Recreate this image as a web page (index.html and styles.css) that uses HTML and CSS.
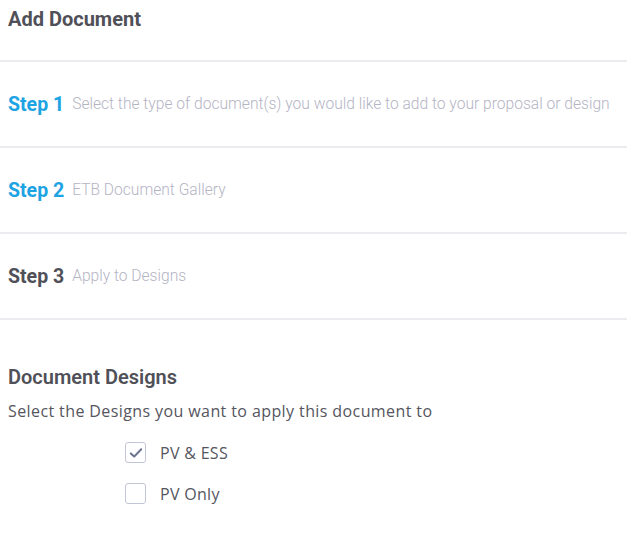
FILE: index.html
```html
<!DOCTYPE html>
<html lang="en">
<head>
    <meta charset="UTF-8">
    <title>Add Document</title>
    <link rel="stylesheet" href="styles.css">
</head>
<body>

<div class="modal">
    <h2 class="modal-title">Add Document</h2>

    <div class="step">
        <span class="step-label active">Step 1</span>
        <span class="step-desc">Select the type of document(s) you would like to add to your proposal or design</span>
    </div>

    <div class="step">
        <span class="step-label active">Step 2</span>
        <span class="step-desc">ETB Document Gallery</span>
    </div>

    <div class="step">
        <span class="step-label">Step 3</span>
        <span class="step-desc">Apply to Designs</span>
    </div>

    <div class="designs">
        <h3>Document Designs</h3>
        <p>Select the Designs you want to apply this document to</p>

        <label class="check-row">
            <span class="box checked">
                <svg width="14" height="12" viewBox="0 0 14 12"><path d="M1.8 6.4 L5.2 9.6 L12.2 2.2" fill="none" stroke="#6c7390" stroke-width="2" stroke-linecap="round" stroke-linejoin="round"/></svg>
            </span>
            PV &amp; ESS
        </label>
        <label class="check-row">
            <span class="box"></span>
            PV Only
        </label>
    </div>
</div>

</body>
</html>
```

FILE: styles.css
```css
body {
    margin: 0;
    background: #fff;
    font-family: Roboto, "Liberation Sans", sans-serif;
}

.modal {
    width: 627px;
}

.modal-title {
    margin: 0;
    padding: 6px 8px 0;
    height: 54px;
    line-height: 26px;
    font-size: 20px;
    font-weight: 700;
    color: #505058;
    border-bottom: 2px solid #ebebf0;
    box-sizing: content-box;
}

.step {
    display: flex;
    align-items: center;
    height: 84px;
    padding: 0 8px;
    border-bottom: 2px solid #ebebf0;
    white-space: nowrap;
}

.step-label {
    font-size: 19.5px;
    font-weight: 700;
    color: #505058;
    margin-right: 8px;
}

.step-label.active {
    color: #1ba3e3;
}

.step-desc {
    font-size: 15.6px;
    font-weight: 300;
    color: #b4b4c4;
}

.designs {
    padding: 45px 8px 0;
}

.designs h3 {
    margin: 0;
    font-size: 20px;
    font-weight: 600;
    color: #505058;
}

.designs p {
    margin: 11px 0 10px;
    font-family: "Open Sans", sans-serif;
    font-size: 16px;
    letter-spacing: 0.4px;
    color: #55555e;
}

.check-row {
    display: flex;
    align-items: center;
    gap: 14px;
    margin-left: 117px;
    height: 41px;
    font-family: "Open Sans", sans-serif;
    font-size: 16px;
    letter-spacing: 0.3px;
    color: #55555e;
}

.box {
    width: 19px;
    height: 19px;
    border: 1px solid #c2c5d5;
    border-radius: 3px;
    display: flex;
    align-items: center;
    justify-content: center;
}
```
